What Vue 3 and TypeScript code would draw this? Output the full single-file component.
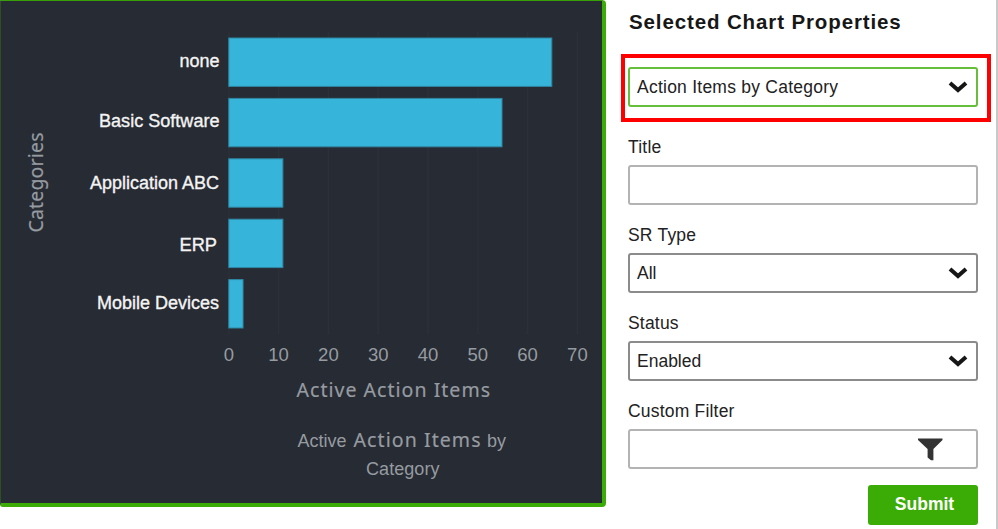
<script setup lang="ts">
import { ref } from 'vue'

interface Category {
  name: string
  value: number
  start: number
  width: number
  baseline: number
}

const categories: Category[] = [
  { name: 'none', value: 65, start: 179.5, width: 40, baseline: 67 },
  { name: 'Basic Software', value: 55, start: 99, width: 120.5, baseline: 126.5 },
  { name: 'Application ABC', value: 11, start: 90, width: 129, baseline: 189 },
  { name: 'ERP', value: 11, start: 179.5, width: 37.5, baseline: 250.5 },
  { name: 'Mobile Devices', value: 3, start: 97, width: 122, baseline: 309 },
]
const ticks = [0, 10, 20, 30, 40, 50, 60, 70]
const xOf = (value: number): number => 228.8 + value * 4.98
const yOf = (index: number): number => 38 + index * 60.4

const chart = ref('Action Items by Category')
const title = ref('')
const srType = ref('All')
const status = ref('Enabled')
const customFilter = ref('')
</script>

<template>
  <main class="page">
    <section class="chart-panel">
      <svg class="chart" viewBox="1 1 601 502" width="601" height="502">
        <line v-for="t in ticks" :key="t" class="grid" :x1="xOf(t)" :x2="xOf(t)" y1="32" y2="334" />
        <g v-for="(c, i) in categories" :key="c.name">
          <rect class="bar" :x="xOf(0)" :y="yOf(i)" :width="xOf(c.value) - xOf(0) - 0.7" height="48.4" />
          <text class="name" :x="c.start" :y="c.baseline" :textLength="c.width" lengthAdjust="spacingAndGlyphs">{{ c.name }}</text>
        </g>
        <text v-for="t in ticks" :key="'t' + t" class="tick" :x="xOf(t)" y="360.5">{{ t }}</text>
        <text class="axis" transform="translate(42.5 232.5) rotate(-90)" textLength="100">Categories</text>
        <text class="axis" x="296.5" y="397" textLength="193.5">Active Action Items</text>
        <text class="caption" x="297.5" y="447" textLength="49">Active</text>
        <text class="axis" x="353.5" y="447" textLength="127">Action Items</text>
        <text class="caption" x="487" y="447" textLength="19">by</text>
        <text class="caption" x="366" y="475" textLength="73.5">Category</text>
      </svg>
    </section>

    <form class="properties" @submit.prevent>
      <h2>Selected Chart Properties</h2>
      <div class="control highlighted">
        <select v-model="chart">
          <option>Action Items by Category</option>
        </select>
        <svg class="chevron" viewBox="0 0 20 14"><path d="M2 3 L10 10 L18 3" /></svg>
      </div>

      <label for="title" class="first">Title</label>
      <div class="control"><input id="title" v-model="title" /></div>

      <label for="sr">SR Type</label>
      <div class="control">
        <select id="sr" v-model="srType" class="dark">
          <option>All</option>
        </select>
        <svg class="chevron" viewBox="0 0 20 14"><path d="M2 3 L10 10 L18 3" /></svg>
      </div>

      <label for="status">Status</label>
      <div class="control">
        <select id="status" v-model="status" class="dark">
          <option>Enabled</option>
        </select>
        <svg class="chevron" viewBox="0 0 20 14"><path d="M2 3 L10 10 L18 3" /></svg>
      </div>

      <label for="filter">Custom Filter</label>
      <div class="control">
        <input id="filter" v-model="customFilter" />
        <svg class="funnel" viewBox="0 0 25 23">
          <path d="M0 .5 H24.5 V2 L15.4 11 V22.3 H13 L9.6 19.5 V11 L0 2 Z" />
        </svg>
      </div>
      <button type="submit">Submit</button>
    </form>
  </main>
</template>

<style>
body {
  margin: 0;
  background: #fff;
}
</style>

<style scoped>
.page {
  box-sizing: border-box;
  display: flex;
  align-items: flex-start;
  width: 998px;
  height: 529px;
  overflow: hidden;
  border-right: 2px solid #c9c9c9;
  background: #fff;
  font-family: "Liberation Sans", Arial, sans-serif;
}
.chart-panel {
  box-sizing: border-box;
  flex: none;
  width: 606px;
  height: 507px;
  border: 4px solid #3bac06;
  border-top: 1px solid #36a006;
  border-left: 1px solid #2d5023;
  border-radius: 0 4px 4px 3px;
  background: #272b33;
}
.chart {
  display: block;
}
.grid {
  stroke: #2c3038;
  stroke-width: 1.5;
}
.bar {
  fill: #37b4da;
  stroke: #2f87a3;
  stroke-width: 1;
}
.name {
  fill: #f4f4f4;
  stroke: #f4f4f4;
  stroke-width: 0.35;
  font-size: 18px;
}
.tick {
  fill: #969ba1;
  font-size: 18.5px;
  text-anchor: middle;
}
.axis {
  fill: #969ba1;
  stroke: #969ba1;
  stroke-width: 0.2;
  font-family: "Noto Sans", sans-serif;
  font-size: 19.5px;
}
.caption {
  fill: #969ba1;
  font-size: 18px;
}
.properties {
  display: flex;
  flex-direction: column;
  width: 350px;
  margin-left: 22px;
}
h2 {
  height: 24px;
  margin: 10px 0 33px 1px;
  color: #171717;
  font-size: 20.5px;
  line-height: 24px;
  letter-spacing: 0.88px;
  white-space: nowrap;
}
label {
  height: 20px;
  margin: 20px 0 8px;
  color: #222;
  font-size: 17.5px;
  line-height: 20px;
  letter-spacing: 0.2px;
  white-space: nowrap;
}
.first {
  margin-top: 30px;
}
.control {
  position: relative;
  height: 40px;
}
input,
select {
  box-sizing: border-box;
  display: block;
  width: 100%;
  height: 40px;
  margin: 0;
  padding: 0 50px 0 7px;
  appearance: none;
  border: 2px solid #b3b3b3;
  border-radius: 3px;
  outline: 0;
  background: #fff;
  color: #222;
  font: 17.5px "Liberation Sans", Arial, sans-serif;
}
.dark {
  border-color: #8b8b8b;
}
.highlighted select {
  border-color: #66bf3b;
  letter-spacing: 0.24px;
}
.highlighted::after {
  position: absolute;
  inset: -13px -13px -15px -7px;
  border: 4px solid #fe0000;
  content: "";
  pointer-events: none;
}
.chevron {
  position: absolute;
  top: 13px;
  right: 10px;
  width: 20px;
  height: 14px;
  fill: none;
  stroke: #161616;
  stroke-width: 4;
}
.funnel {
  position: absolute;
  top: 9px;
  left: 290px;
  width: 25px;
  height: 23px;
  fill: #333;
}
button {
  align-self: flex-end;
  width: 110px;
  height: 40px;
  margin: 16px 0 0;
  padding: 0 0 1px 3px;
  border: 0;
  border-radius: 3px;
  background: #3bac06;
  color: #fff;
  font: bold 17.5px "Liberation Sans", Arial, sans-serif;
}
</style>
